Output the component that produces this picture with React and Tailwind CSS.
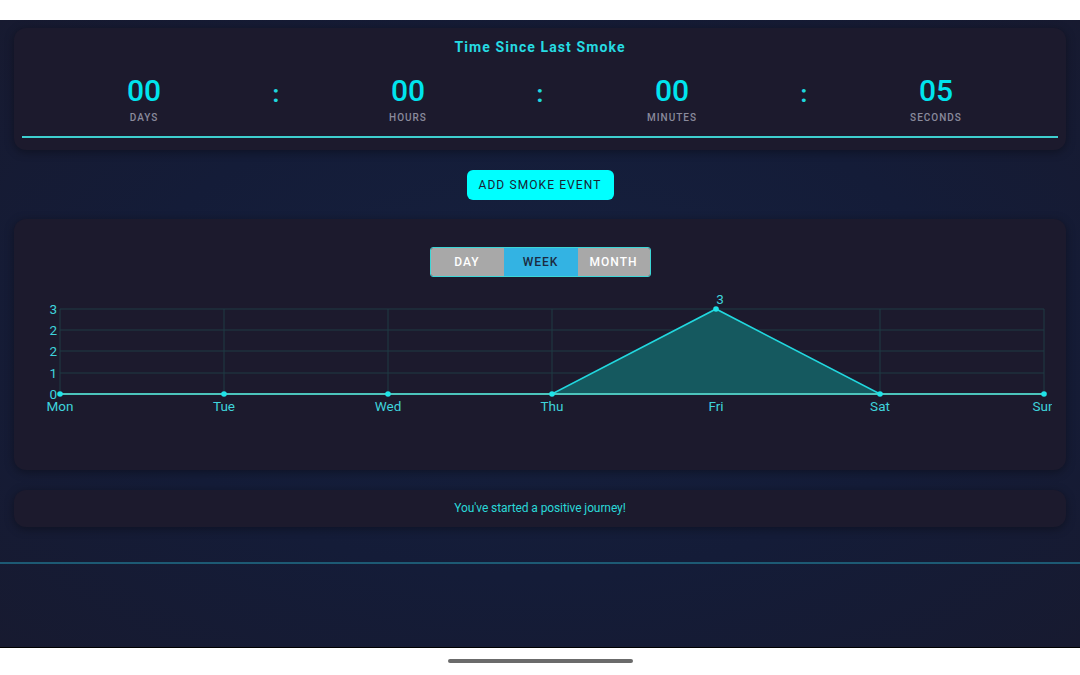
import React from 'react';

const units = [
  { value: '00', label: 'DAYS' },
  { value: '00', label: 'HOURS' },
  { value: '00', label: 'MINUTES' },
  { value: '05', label: 'SECONDS' },
];

const days = ['Mon', 'Tue', 'Wed', 'Thu', 'Fri', 'Sat', 'Sun'];
const counts = [0, 0, 0, 0, 3, 0, 0];

const WeekChart = () => {
  const x0 = 46;
  const step = 164;
  const top = 32;
  const bottom = 117;
  const yFor = (v) => bottom - (v / 3) * (bottom - top);
  const pts = counts.map((c, i) => [x0 + i * step, yFor(c)]);
  const line = pts.map((p) => p.join(',')).join(' ');
  const area = `${x0},${bottom} ${line} ${x0 + 6 * step},${bottom}`;
  const yTicks = [
    { y: 32, t: '3' },
    { y: 53, t: '2' },
    { y: 74, t: '2' },
    { y: 96, t: '1' },
    { y: 117, t: '0' },
  ];

  return (
    <svg width="1038" height="150" className="block" style={{ fontFamily: 'Roboto, sans-serif' }}>
      {/* grid */}
      {yTicks.slice(0, 4).map((t) => (
        <line key={t.y} x1={x0} x2={x0 + 6 * step} y1={t.y} y2={t.y} stroke="#1e3a45" strokeWidth="1" />
      ))}
      {days.map((d, i) => (
        <line key={d} x1={x0 + i * step} x2={x0 + i * step} y1={top} y2={bottom} stroke="#1e3a45" strokeWidth="1" />
      ))}
      <polygon points={area} fill="#15595f" />
      <polyline points={line} fill="none" stroke="#22d8df" strokeWidth="1.6" />
      <line x1={x0} x2={x0 + 6 * step} y1={bottom} y2={bottom} stroke="#4cc4bc" strokeWidth="2" />
      {pts.map(([x, y], i) => (
        <circle key={i} cx={x} cy={y} r="2.8" fill="#1fe3e8" />
      ))}
      {yTicks.map((t) => (
        <text key={t.y} x={x0 - 3} y={t.y + 1} textAnchor="end" dominantBaseline="middle" fontSize="13.5" fill="#3fd4dc">
          {t.t}
        </text>
      ))}
      {days.map((d, i) => (
        <text key={d} x={x0 + i * step} y={130} textAnchor="middle" dominantBaseline="middle" fontSize="13.5" fill="#3fd4dc">
          {d}
        </text>
      ))}
      <text x={x0 + 4 * step + 4} y={23} textAnchor="middle" dominantBaseline="middle" fontSize="13.5" fill="#3fd4dc">
        3
      </text>
    </svg>
  );
};

const App = () => {
  return (
    <div className="w-full h-[675px] flex flex-col bg-white" style={{ fontFamily: 'Roboto, "Liberation Sans", sans-serif' }}>
      <div className="h-[20px] bg-white" />

      <div className="h-[628px] bg-[radial-gradient(ellipse_at_center,_#16213f_0%,_#141c38_55%,_#171a30_100%)] border-b border-black px-[14px] pt-[8px] flex flex-col">
        {/* Timer card */}
        <div className="h-[122px] rounded-xl bg-[#1c1a2d] shadow-[0_2px_10px_rgba(0,0,0,0.35)] px-[8px] pt-[9px] flex flex-col">
          <h2 className="text-center text-[14px] leading-[20px] font-bold tracking-[1.1px] text-[#26dbe2]">Time Since Last Smoke</h2>
          <div className="-mx-[10px] mt-[17px] flex">
            {units.map((u, i) => (
              <React.Fragment key={u.label}>
                {i > 0 && (
                  <div className="w-0 relative">
                    <span className="absolute -translate-x-1/2 top-[5px] text-[24px] leading-[30px] font-bold text-[#1ed6de]">:</span>
                  </div>
                )}
                <div className="flex-1 flex flex-col items-center">
                  <span className="text-[30px] leading-[34px] font-medium text-[#00e4ee]">{u.value}</span>
                  <span className="mt-[4px] text-[10px] leading-[12px] font-medium tracking-[1px] text-[#8a8a9c]">{u.label}</span>
                </div>
              </React.Fragment>
            ))}
          </div>
          <div className="mt-[12px] h-[2px] bg-[#3ecfcf]" />
        </div>

        <div className="mt-[20px] flex justify-center">
          <button className="h-[30px] w-[147px] rounded-md bg-[#00ffff] text-[12px] tracking-[1.1px] text-[#1b2233]">
            ADD SMOKE EVENT
          </button>
        </div>

        {/* Chart card */}
        <div className="mt-[19px] h-[251px] rounded-xl bg-[#1c1a2d] shadow-[0_2px_10px_rgba(0,0,0,0.35)] pt-[28px] flex flex-col">
          <div className="flex justify-center">
            <div className="flex h-[30px] border border-[#3cd6d6] rounded-[3px] overflow-hidden text-[12px] font-medium tracking-[1px]">
              <div className="w-[73px] flex items-center justify-center bg-[#a8a8a8] text-white">DAY</div>
              <div className="w-[74px] flex items-center justify-center bg-[#33b3e3] text-[#1b2a40]">WEEK</div>
              <div className="w-[72px] flex items-center justify-center bg-[#a8a8a8] text-white">MONTH</div>
            </div>
          </div>
          <WeekChart />
        </div>

        {/* Message card */}
        <div className="mt-[20px] h-[37px] rounded-xl bg-[#1c1a2d] shadow-[0_2px_10px_rgba(0,0,0,0.35)] flex items-center justify-center">
          <p className="text-[12px] leading-[16px] -mt-[2px] tracking-[-0.1px] text-[#2ad8d8]">You've started a positive journey!</p>
        </div>

        <div className="mt-[35px] -mx-[14px] h-[2px] bg-[#1d5a74]" />
      </div>

      <div className="flex-1 bg-white flex items-center justify-center">
        <div className="w-[185px] h-[4px] rounded-full bg-[#6b6b6b] mb-[1px]" />
      </div>
    </div>
  );
};

export default App;
